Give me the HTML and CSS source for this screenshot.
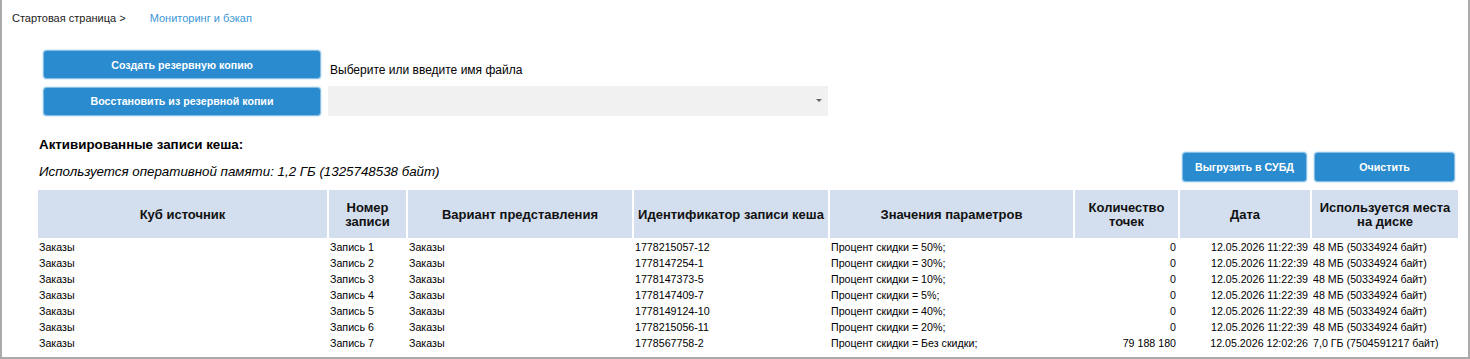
FILE: index.html
```html
<!DOCTYPE html>
<html lang="ru">
<head>
<meta charset="utf-8">
<title>Мониторинг и бэкап</title>
<link rel="stylesheet" href="styles.css">
</head>
<body>
<div class="frame">
  <div class="crumbs">
    <span class="crumb">Стартовая страница &gt;</span>
    <a class="crumb-link" href="#">Мониторинг и бэкап</a>
  </div>

  <div class="backup">
    <button class="btn btn-wide">Создать резервную копию</button>
    <div class="file-label">Выберите или введите имя файла</div>
    <button class="btn btn-wide">Восстановить из резервной копии</button>
    <div class="select">
      <span class="select-arrow"></span>
    </div>
  </div>

  <div class="cache">
    <div class="cache-title">Активированные записи кеша:</div>
    <div class="cache-bar">
      <div class="mem">Используется оперативной памяти: 1,2 ГБ (1325748538 байт)</div>
      <div class="actions">
        <button class="btn btn-export">Выгрузить в СУБД</button>
        <button class="btn btn-clear">Очистить</button>
      </div>
    </div>

    <table class="grid">
      <colgroup>
        <col class="c1"><col class="c2"><col class="c3"><col class="c4">
        <col class="c5"><col class="c6"><col class="c7"><col class="c8">
      </colgroup>
      <thead>
        <tr>
          <th>Куб источник</th>
          <th>Номер<br>записи</th>
          <th>Вариант представления</th>
          <th>Идентификатор записи кеша</th>
          <th>Значения параметров</th>
          <th>Количество<br>точек</th>
          <th>Дата</th>
          <th>Используется места<br>на диске</th>
        </tr>
      </thead>
      <tbody>
        <tr><td>Заказы</td><td>Запись 1</td><td>Заказы</td><td>1778215057-12</td><td>Процент скидки = 50%;</td><td class="num">0</td><td class="num">12.05.2026 11:22:39</td><td>48 МБ (50334924 байт)</td></tr>
        <tr><td>Заказы</td><td>Запись 2</td><td>Заказы</td><td>1778147254-1</td><td>Процент скидки = 30%;</td><td class="num">0</td><td class="num">12.05.2026 11:22:39</td><td>48 МБ (50334924 байт)</td></tr>
        <tr><td>Заказы</td><td>Запись 3</td><td>Заказы</td><td>1778147373-5</td><td>Процент скидки = 10%;</td><td class="num">0</td><td class="num">12.05.2026 11:22:39</td><td>48 МБ (50334924 байт)</td></tr>
        <tr><td>Заказы</td><td>Запись 4</td><td>Заказы</td><td>1778147409-7</td><td>Процент скидки = 5%;</td><td class="num">0</td><td class="num">12.05.2026 11:22:39</td><td>48 МБ (50334924 байт)</td></tr>
        <tr><td>Заказы</td><td>Запись 5</td><td>Заказы</td><td>1778149124-10</td><td>Процент скидки = 40%;</td><td class="num">0</td><td class="num">12.05.2026 11:22:39</td><td>48 МБ (50334924 байт)</td></tr>
        <tr><td>Заказы</td><td>Запись 6</td><td>Заказы</td><td>1778215056-11</td><td>Процент скидки = 20%;</td><td class="num">0</td><td class="num">12.05.2026 11:22:39</td><td>48 МБ (50334924 байт)</td></tr>
        <tr><td>Заказы</td><td>Запись 7</td><td>Заказы</td><td>1778567758-2</td><td>Процент скидки = Без скидки;</td><td class="num">79 188 180</td><td class="num">12.05.2026 12:02:26</td><td>7,0 ГБ (7504591217 байт)</td></tr>
      </tbody>
    </table>
  </div>
</div>
</body>
</html>
```

FILE: styles.css
```css
* { box-sizing: border-box; }

html, body {
  margin: 0;
  padding: 0;
  background: #fff;
}

body {
  font-family: "Liberation Sans", Arial, sans-serif;
  color: #000;
}

.frame {
  width: 1470px;
  height: 359px;
  border-left: 2px solid #aaaaaa;
  border-right: 2px solid #aaaaaa;
  border-bottom: 2px solid #aaaaaa;
  overflow: hidden;
}

.crumbs {
  padding: 12px 0 0 10px;
  font-size: 11px;
  line-height: 13px;
  height: 25px;
  color: #222;
}

.crumb-link {
  margin-left: 21px;
  color: #3a97d6;
  text-decoration: none;
}

.backup {
  margin: 26px 0 0 42px;
  display: grid;
  grid-template-columns: 276px 500px;
  grid-template-rows: 27px 30px;
  column-gap: 8px;
  row-gap: 8px;
  align-items: center;
}

.btn {
  border: none;
  background: #2a8bcf;
  color: #fff;
  font-family: "Liberation Sans", Arial, sans-serif;
  font-weight: bold;
  font-size: 10.67px;
  border-radius: 3px;
  box-shadow: 0 0 1.5px 0.5px rgba(42, 139, 207, 0.7);
  padding: 0;
  cursor: pointer;
}

.btn-wide {
  width: 276px;
  height: 27px;
}

.file-label {
  align-self: end;
  padding: 0 0 0 2px;
  font-size: 12px;
  line-height: 14px;
  margin-bottom: 1px;
}

.select {
  height: 30px;
  background: #f1f1f1;
  position: relative;
}

.select-arrow {
  position: absolute;
  right: 6px;
  top: 13px;
  width: 0;
  height: 0;
  border-left: 3.5px solid transparent;
  border-right: 3.5px solid transparent;
  border-top: 3.5px solid #666;
}

.cache {
  padding: 0 12px 0 36px;
  margin-top: 21px;
}

.cache-title {
  font-weight: bold;
  font-size: 13.33px;
  line-height: 16px;
  padding-left: 1px;
}

.cache-bar {
  display: flex;
  justify-content: space-between;
  align-items: flex-end;
  height: 28px;
}

.mem {
  font-style: italic;
  font-size: 13.33px;
  line-height: 16px;
  padding-left: 1px;
  margin-bottom: 1px;
}

.actions {
  display: flex;
  gap: 9px;
  margin-right: 2px;
}

.btn-export {
  width: 123px;
  height: 28px;
}

.btn-clear {
  width: 139px;
  height: 28px;
}

.grid {
  margin: 9px 0 0 -2px;
  border-collapse: separate;
  border-spacing: 2px 0;
  table-layout: fixed;
  width: 1422px;
}

.c1 { width: 289px; }
.c2 { width: 77px; }
.c3 { width: 224px; }
.c4 { width: 194px; }
.c5 { width: 243px; }
.c6 { width: 103px; }
.c7 { width: 130px; }
.c8 { width: 146px; }

.grid th {
  background: #d3dfee;
  height: 48px;
  font-size: 13px;
  line-height: 14px;
  font-weight: bold;
  text-align: center;
  padding: 2px 0 0;
  color: #111;
}

.grid td {
  font-size: 10.67px;
  line-height: 14px;
  height: 16px;
  vertical-align: bottom;
  padding: 0 1px;
  white-space: nowrap;
  overflow: hidden;
}

.grid td.num {
  text-align: right;
  padding-right: 2px;
}
```
